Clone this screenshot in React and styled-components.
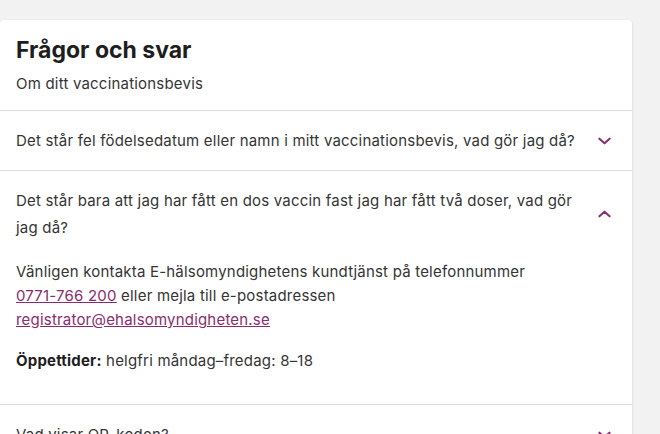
import React, { useState } from "react";
import styled, { createGlobalStyle } from "styled-components";

const GlobalStyle = createGlobalStyle`
  html, body {
    margin: 0;
    background: #f2f2f2;
    font-family: Inter, "Liberation Sans", sans-serif;
    color: #353535;
  }
`;

const questions = [
  {
    q: "Det står fel födelsedatum eller namn i mitt vaccinationsbevis, vad gör jag då?",
  },
  {
    q: "Det står bara att jag har fått en dos vaccin fast jag har fått två doser, vad gör jag då?",
    answer: true,
  },
  {
    q: "Vad visar QR-koden?",
  },
];

export default function App() {
  const [open, setOpen] = useState(1);

  return (
    <>
      <GlobalStyle />
      <Page>
        <Card>
          <Header>
            <Title>Frågor och svar</Title>
            <Subtitle>Om ditt vaccinationsbevis</Subtitle>
          </Header>
          {questions.map((item, i) => (
            <Item key={i}>
              <Question onClick={() => setOpen(open === i ? -1 : i)}>
                <span>{item.q}</span>
                <Chevron $open={open === i} />
              </Question>
              {open === i && item.answer && (
                <Answer>
                  <p>
                    Vänligen kontakta E-hälsomyndighetens kundtjänst på telefonnummer{" "}
                    <Link href="#">0771-766 200</Link> eller mejla till e-postadressen{" "}
                    <Link href="#">registrator@ehalsomyndigheten.se</Link>
                  </p>
                  <p>
                    <strong>Öppettider:</strong> helgfri måndag–fredag: 8–18
                  </p>
                </Answer>
              )}
            </Item>
          ))}
        </Card>
      </Page>
    </>
  );
}

function Chevron({ $open }) {
  return (
    <ChevronIcon viewBox="0 0 14 8" $open={$open}>
      <path
        d="M1.5 1.5 L7 6.5 L12.5 1.5"
        fill="none"
        stroke="currentColor"
        strokeWidth="2.2"
        strokeLinecap="round"
        strokeLinejoin="round"
      />
    </ChevronIcon>
  );
}

const Page = styled.div`
  padding-top: 20px;
  width: 632px;
`;

const Card = styled.div`
  background: #fff;
  border-radius: 4px 4px 0 0;
  box-shadow: 0 1px 3px rgba(0, 0, 0, 0.14);
`;

const Header = styled.div`
  padding: 14px 16px 14px;
`;

const Title = styled.h2`
  margin: 0;
  font-size: 23px;
  line-height: 32px;
  font-weight: 700;
  color: #1e1e1e;
`;

const Subtitle = styled.p`
  margin: 6px 0 0;
  font-size: 15px;
  line-height: 24px;
  letter-spacing: 0.2px;
`;

const Item = styled.div`
  border-top: 1px solid #dcdcdc;
`;

const Question = styled.button`
  display: flex;
  align-items: center;
  justify-content: space-between;
  gap: 4px;
  width: 100%;
  padding: 16px 21px 16px 16px;
  border: 0;
  background: none;
  text-align: left;
  font: inherit;
  font-size: 15px;
  line-height: 27px;
  letter-spacing: 0.2px;
  color: #353535;
  cursor: pointer;

  span {
    flex: 1;
    max-width: 566px;
  }
`;

const ChevronIcon = styled.svg`
  flex: none;
  width: 13px;
  height: 8px;
  color: #8b2c6e;
  transform: ${(p) => (p.$open ? "rotate(180deg)" : "none")};
`;

const Answer = styled.div`
  padding: 3px 60px 31px 16px;
  font-size: 15px;
  line-height: 24px;
  letter-spacing: 0.2px;

  p {
    margin: 0;
  }
  p + p {
    margin-top: 17px;
  }
  strong {
    font-weight: 700;
    color: #1e1e1e;
  }
`;

const Link = styled.a`
  color: #8b2c6e;
  text-decoration: underline;
  white-space: nowrap;
`;
